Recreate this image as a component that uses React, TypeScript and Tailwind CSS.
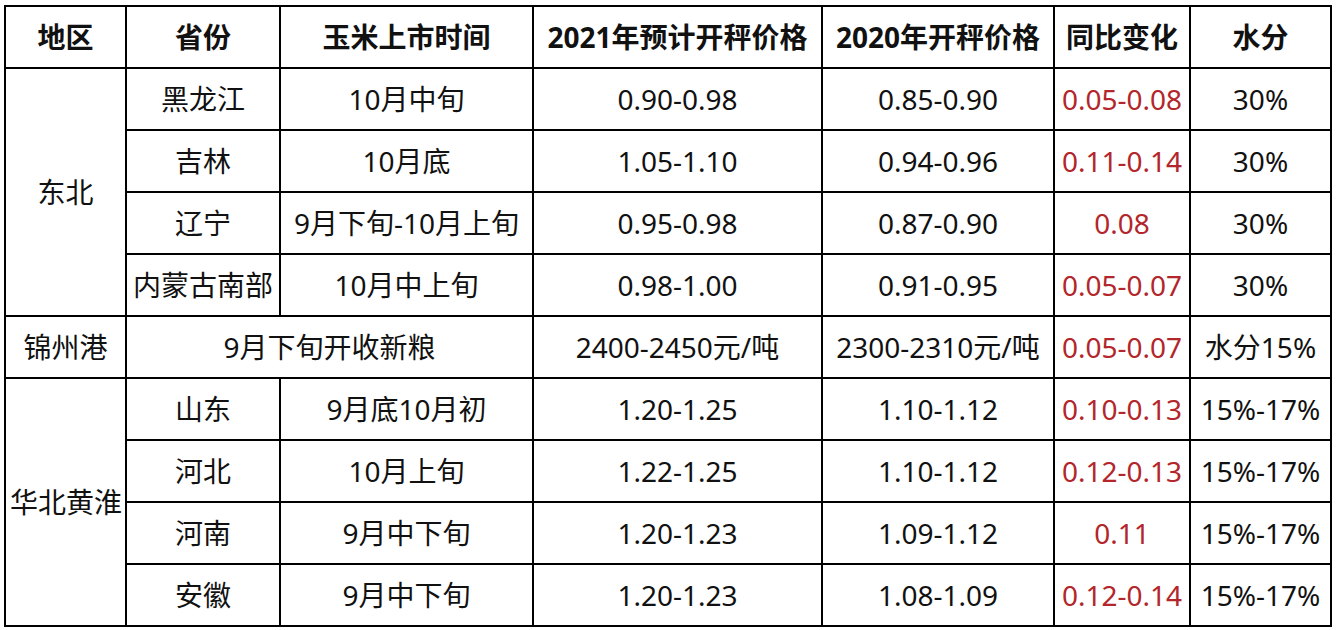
import React from "react";

type Row = {
  region?: { name: string; span: number; left?: boolean };
  province?: string;
  time: string;
  timeSpan?: number;
  p2021: string;
  p2020: string;
  change: string;
  water: string;
};

const rows: Row[] = [
  { region: { name: "东北", span: 4 }, province: "黑龙江", time: "10月中旬", p2021: "0.90-0.98", p2020: "0.85-0.90", change: "0.05-0.08", water: "30%" },
  { province: "吉林", time: "10月底", p2021: "1.05-1.10", p2020: "0.94-0.96", change: "0.11-0.14", water: "30%" },
  { province: "辽宁", time: "9月下旬-10月上旬", p2021: "0.95-0.98", p2020: "0.87-0.90", change: "0.08", water: "30%" },
  { province: "内蒙古南部", time: "10月中上旬", p2021: "0.98-1.00", p2020: "0.91-0.95", change: "0.05-0.07", water: "30%" },
  { region: { name: "锦州港", span: 1 }, time: "9月下旬开收新粮", timeSpan: 2, p2021: "2400-2450元/吨", p2020: "2300-2310元/吨", change: "0.05-0.07", water: "水分15%" },
  { region: { name: "华北黄淮", span: 4, left: true }, province: "山东", time: "9月底10月初", p2021: "1.20-1.25", p2020: "1.10-1.12", change: "0.10-0.13", water: "15%-17%" },
  { province: "河北", time: "10月上旬", p2021: "1.22-1.25", p2020: "1.10-1.12", change: "0.12-0.13", water: "15%-17%" },
  { province: "河南", time: "9月中下旬", p2021: "1.20-1.23", p2020: "1.09-1.12", change: "0.11", water: "15%-17%" },
  { province: "安徽", time: "9月中下旬", p2021: "1.20-1.23", p2020: "1.08-1.09", change: "0.12-0.14", water: "15%-17%" },
];

const headers = ["地区", "省份", "玉米上市时间", "2021年预计开秤价格", "2020年开秤价格", "同比变化", "水分"];

const cell = "border-2 border-black text-center align-middle p-0 whitespace-nowrap";

export default function App() {
  return (
    <div className="min-h-screen bg-white pl-[4px] pt-[5px] font-['Noto_Sans','Noto_Sans_CJK_SC',sans-serif] text-[28px] text-[#111]">
      <table className="border-collapse table-fixed w-[1328px]">
        <colgroup>
          <col className="w-[121px]" />
          <col className="w-[154px]" />
          <col className="w-[253px]" />
          <col className="w-[289px]" />
          <col className="w-[232px]" />
          <col className="w-[136px]" />
          <col className="w-[141px]" />
        </colgroup>
        <thead>
          <tr className="h-[62px]">
            {headers.map((h) => (
              <th key={h} className={`${cell} font-bold`}>
                {h}
              </th>
            ))}
          </tr>
        </thead>
        <tbody>
          {rows.map((r, i) => (
            <tr key={i} className="h-[62px]">
              {r.region && (
                <td
                  rowSpan={r.region.span}
                  className={`${cell} ${r.region.left ? "text-left pl-[4px]" : ""}`}
                >
                  {r.region.name}
                </td>
              )}
              {r.province && <td className={cell}>{r.province}</td>}
              <td colSpan={r.timeSpan} className={cell}>
                {r.time}
              </td>
              <td className={cell}>{r.p2021}</td>
              <td className={cell}>{r.p2020}</td>
              <td className={`${cell} text-[#b3262b]`}>{r.change}</td>
              <td className={cell}>{r.water}</td>
            </tr>
          ))}
        </tbody>
      </table>
    </div>
  );
}
